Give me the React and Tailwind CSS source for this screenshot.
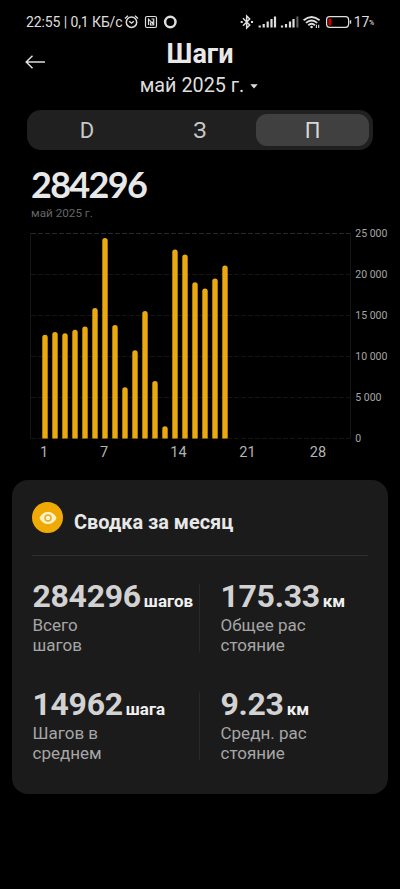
import React from "react"

const steps = [
  12650, 13000, 12850, 13250, 13650, 15900, 24450, 13850, 6250, 10750, 15550,
  7000, 1500, 23050, 22450, 19050, 18300, 19500, 21100,
]

const tabs = ["D", "З", "П"]

const yLabels = ["25 000", "20 000", "15 000", "10 000", "5 000", "0"]

const xLabels = [
  { text: "1", x: 44 },
  { text: "7", x: 104 },
  { text: "14", x: 178.5 },
  { text: "21", x: 247.5 },
  { text: "28", x: 318 },
]

const stats = [
  { value: "284296", unit: "шагов", label: ["Всего", "шагов"] },
  { value: "175.33", unit: "км", label: ["Общее рас", "стояние"] },
  { value: "14962", unit: "шага", label: ["Шагов в", "среднем"] },
  { value: "9.23", unit: "км", label: ["Средн. рас", "стояние"] },
]

function StatusBar() {
  return (
    <div className="flex h-11 items-center pl-[26px] pr-[25px] text-[#dedede]">
      <span className="w-[97px] whitespace-nowrap text-[14px] tracking-[-0.1px]">
        22:55 | 0,1 КБ/с
      </span>
      <svg className="h-6 w-[60px]" viewBox="123 10 60 24" fill="none" stroke="currentColor">
        <circle cx="131.5" cy="22.2" r="5.2" strokeWidth="1.5" />
        <path d="M129.2 21.3l2.3 1.9 2.3-1.9M125 18.4l3-2.7M138 18.4l-3-2.7" strokeWidth="1.4" />
        <rect x="145.5" y="16.5" width="11" height="11" rx="1.5" strokeWidth="1.2" />
        <path d="M148.5 25V19.200L152.500 23.500V21.500" strokeWidth="1.200" />
        <path d="M151.500 19H153.700V25H150.500V22.500" strokeWidth="1.200" />
        <circle cx="170.300" cy="22" r="5.200" strokeWidth="2.500" />
      </svg>
      <svg className="ml-auto h-6 w-[114px]" viewBox="238 10 114 24" fill="none" stroke="currentColor">
        <path d="M242 18.300l6.700 6.700-3 3V16l3 3-6.700 6.700" strokeWidth="1.500" />
        <path d="M239.700 22h2M250 22h2" strokeWidth="2" />
        <path d="M258.700 27.500v-2M262.700 27.500v-3.500M266.700 27.500v-6M270.500 27.500v-8.500M274 27.500v-11" strokeWidth="2.200" />
        <path d="M281 27.500v-2M285 27.500v-3.500M289 27.500v-6M292.500 27.500v-8.500" strokeWidth="2.200" />
        <path d="M296.400 27.500v-11" strokeWidth="2" stroke="#666" />
        <path d="M302.600 20.200q8-6.600 16 0M305 22.900q5.600-4.800 11.200 0M307.300 25.300q3.300-2.900 6.600 0" strokeWidth="1.900" />
        <circle cx="310.600" cy="27" r="1.300" fill="currentColor" stroke="none" />
        <path d="M315.400 24.700v3.300M317.700 24.700v3.300" strokeWidth="1.100" />
        <rect x="325.600" y="16.700" width="22" height="10.600" rx="3" strokeWidth="1.200" />
        <rect x="327.300" y="18.500" width="3.200" height="7" rx="1" fill="#c80000" stroke="none" />
        <path d="M349.500 20.300v3.400" strokeWidth="1.400" />
      </svg>
      <span className="ml-[1px] text-[14px] tracking-[-0.3px]">17</span>
      <span className="mt-[3px] w-[6px] text-[7px] font-medium">%</span>
    </div>
  )
}

function Header() {
  return (
    <header className="relative h-[65.5px] text-center">
      <svg
        className="absolute left-[25px] top-[10px] h-4 w-5"
        viewBox="0 0 20 16"
        fill="none"
        stroke="#dedede"
        strokeWidth="1.5"
      >
        <path d="M20 8H1.500M7.500 1.700L1.200 8l6.300 6.300" />
      </svg>
      <h1 className="text-[27px] font-bold leading-[20px] text-[#e8e8e8]">
        Шаги
      </h1>
      <div className="mt-[11px] flex items-center justify-center gap-[6px] pr-[2px] text-[19.8px] leading-[22px] text-[#dedede]">
        <span>май 2025 г.</span>
        <svg className="h-[5px] w-2" viewBox="0 0 8 5" fill="#dedede">
          <path d="M0.300 0.300h7.400L4 4.500z" />
        </svg>
      </div>
    </header>
  )
}

function Tabs() {
  return (
    <div className="ml-[26.5px] mr-[27px] flex h-[40.5px] rounded-[14px] bg-[#202020] p-[4px]">
      {tabs.map((tab, i) => (
        <div
          key={tab}
          className={
            i === 2
              ? "flex flex-1 items-center justify-center rounded-[11px] bg-[#404040] pt-px text-[22px] text-[#d8d8d8]"
              : "flex flex-1 items-center justify-center pt-px text-[22px] text-[#c8c8c8]"
          }
        >
          {tab}
        </div>
      ))}
    </div>
  )
}

function Chart() {
  return (
    <svg
      className="block h-[240px] w-[400px]"
      viewBox="0 225 400 240"
      fontFamily="Roboto, sans-serif"
    >
      {yLabels.map((label, i) => (
        <g key={label}>
          <path
            d={`M31 ${233.5 + i * 41}H350`}
            stroke={i === 0 ? "#2a2a2a" : "#141414"}
            strokeDasharray="5 2"
          />
          <text x="355.300" y={236.5 + i * 41} fontSize="10.500" fill="#a6a6a6">
            {label}
          </text>
        </g>
      ))}
      <path d="M30.500 233V438.500M350.500 233V438.500" stroke="#151515" />
      {steps.map((count, i) => {
        const top = 438.5 - (count / 25000) * 205
        const x = 42.3 + i * 10
        return (
          <path
            key={i}
            d={`M${x} 438.5V${top + 2.7}a2.7 2.7 0 0 1 5.4 0V438.5z`}
            fill="#eba911"
          />
        )
      })}
      {xLabels.map((label) => (
        <text
          key={label.text}
          x={label.x}
          y="457"
          fontSize="14.500"
          fill="#b4b4b4"
          textAnchor="middle"
        >
          {label.text}
        </text>
      ))}
    </svg>
  )
}

function Stat({ value, unit, label }) {
  return (
    <div className="h-[108px] pl-[0.5px]">
      <div className="flex h-[35px] items-baseline gap-[3px] whitespace-nowrap leading-[32px]">
        <span className="text-[32px] font-bold tracking-[-0.3px] text-[#d2d2d2]">{value}</span>
        <span className="text-[17px] font-bold text-[#f0f0f0]">{unit}</span>
      </div>
      <div className="text-[17px] leading-5 text-[#a6a6a6]">
        {label[0]}
        <br />
        {label[1]}
      </div>
    </div>
  )
}

function Summary() {
  return (
    <section className="mx-3 mt-[15px] h-[314px] rounded-[16px] bg-[#1b1b1b] px-5">
      <div className="flex h-[76px] items-center border-b border-[#303030]">
        <div className="flex h-[31px] w-[31px] items-center justify-center rounded-full bg-[#efaa05]">
          <svg className="h-[14px] w-[18px]" viewBox="0 0 18 14">
            <path d="M0.500 7C2.500 2.700 5.500 1 9 1s6.500 1.700 8.500 6C15.500 11.300 12.500 13 9 13S2.500 11.300 0.500 7z" fill="#fff3c4" />
            <circle cx="9" cy="7" r="3" fill="none" stroke="#e5ab2c" strokeWidth="1.500" />
          </svg>
        </div>
        <h2 className="ml-[11px] mt-[11px] text-[19.9px] font-bold text-[#e8e8e8]">
          Сводка за месяц
        </h2>
      </div>
      <div className="grid grid-cols-[168px_1fr] pt-6">
        {stats.map((stat, i) => (
          <div key={i} className={i % 2 === 0 ? "flex justify-between" : "pl-[20px]"}>
            <Stat {...stat} />
            {i % 2 === 0 && <div className="mt-1 h-[68px] w-px shrink-0 bg-[#282828]" />}
          </div>
        ))}
      </div>
    </section>
  )
}

export default function App() {
  return (
    <main className="h-[889px] w-[400px] overflow-hidden bg-black font-['Roboto',sans-serif]">
      <StatusBar />
      <Header />
      <Tabs />
      <div className="h-[75px] pl-[31px] pt-[16px]">
        <div className="font-['Lato',sans-serif] text-[36px] font-bold leading-[36px] tracking-[-1.7px] text-[#e8e8e8]">
          284296
        </div>
        <div className="mt-[4px] text-[11.7px] leading-[14px] text-[#666]">май 2025 г.</div>
      </div>
      <Chart />
      <Summary />
    </main>
  )
}
